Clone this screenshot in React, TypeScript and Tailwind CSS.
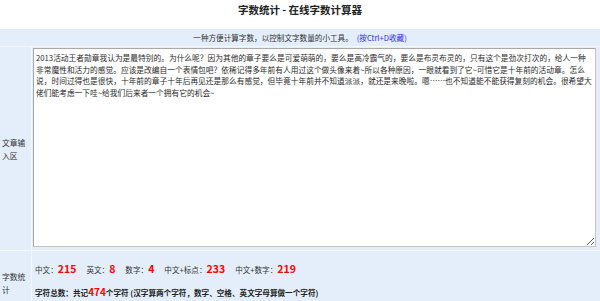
import React from 'react';

const SAMPLE = [
  '2013活动王者勋章我认为是最特别的。为什么呢？因为其他的章子要么是可爱萌萌的，要么是高冷霸气的，要么是布灵布灵的，只有这个是劲次打次的，给人一种',
  '非常魔性和活力的感觉。应该是改编自一个表情包吧？依稀记得多年前有人用过这个做头像来着~所以各种原因，一眼就看到了它~可惜它是十年前的活动章。怎么',
  '说，时间过得也是很快，十年前的章子十年后再见还是那么有感觉，但毕竟十年前并不知道派派，就还是来晚啦。嗯……也不知道能不能获得复刻的机会。很希望大',
  '佬们能考虑一下哇~给我们后来者一个拥有它的机会~',
].join('\n');

const stats = [
  { label: '中文：', value: 215 },
  { label: '英文：', value: 8 },
  { label: '数字：', value: 4 },
  { label: '中文+标点：', value: 233 },
  { label: '中文+数字：', value: 219 },
];

const App: React.FC = () => {
  return (
    <div className="w-[600px] h-[301px] overflow-hidden bg-white text-[#333] font-['Noto_Sans_CJK_SC','Noto_Sans',sans-serif]">
      {/* Title */}
      <h1 className="h-[29px] pt-[3px] text-center text-[10.5px] leading-[14px] font-bold text-[#222]">
        字数统计 - 在线字数计算器
      </h1>

      {/* Subtitle band */}
      <div className="h-[17px] bg-[#e4eefa] flex items-center justify-center text-[7.6px] leading-[17px]">
        <span>一种方便计算字数，以控制文字数量的小工具。</span>
        <span className="ml-[4px] text-[#2c2cf0]">(按Ctrl+D收藏)</span>
      </div>
      <div className="h-px bg-[#f4f8fd]" />

      {/* Input row */}
      <div className="flex h-[203px]">
        <div className="w-[31px] bg-[#e4eefa] flex items-center pl-[2px] text-[7.8px] leading-[13px]">
          文章输入区
        </div>
        <div className="w-px bg-[#f4f8fd]" />
        <div className="flex-1 bg-[#e4eefa] pl-[1px] pt-[1px]">
          <textarea
            defaultValue={SAMPLE}
            className="block w-[563px] h-[199px] bg-white border border-[#c4c4c4] border-t-[#a8a8a8] border-l-[#a8a8a8] px-[2px] pt-[3px] text-[7.72px] leading-[11.5px] text-[#2a2a2a] whitespace-pre overflow-hidden resize outline-none font-['Noto_Sans_CJK_SC',sans-serif]"
          />
        </div>
      </div>
      <div className="h-px bg-[#f4f8fd]" />

      {/* Stats row */}
      <div className="flex h-[63px]">
        <div className="w-[31px] bg-[#e4eefa] flex items-center pl-[2px] text-[7.8px] leading-[13px]">
          字数统计
        </div>
        <div className="w-px bg-[#f4f8fd]" />
        <div className="flex-1 bg-[#e4eefa] pl-[3px] pt-[11px]">
          <div className="flex items-baseline gap-[10px] h-[14px] leading-[14px]">
            {stats.map(s => (
              <span key={s.label} className="text-[7.6px]">
                {s.label}
                <span className="text-[10.5px] font-bold text-[#f00]">{s.value}</span>
              </span>
            ))}
          </div>
          <div className="mt-[9px] text-[7.6px] leading-[14px] font-bold text-[#222]">
            字符总数：共记<span className="text-[10px] text-[#f00]">474</span>个字符 (汉字算两个字符，数字、空格、英文字母算做一个字符)
          </div>
        </div>
      </div>
    </div>
  );
};

export default App;
